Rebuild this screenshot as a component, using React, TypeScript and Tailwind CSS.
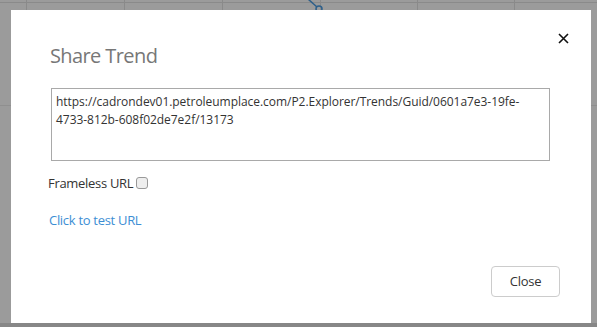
import React from "react";

export default function App() {
  const vLines = [26, 124, 222, 320, 417, 514];
  return (
    <div
      className="relative w-[597px] h-[327px] overflow-hidden bg-[#9b9b9b]"
      style={{ fontFamily: '"Open Sans", "Noto Sans", sans-serif' }}
    >
      {/* background canvas under the overlay */}
      {vLines.map((x) => (
        <div key={x} className="absolute top-0 h-[10px] w-px bg-[#8a8a8a]" style={{ left: x }} />
      ))}
      <div className="absolute left-0 top-[2px] w-full h-px bg-[#8a8a8a]" />
      <div className="absolute left-0 top-[105px] w-full h-px bg-[#8f8f8f]" />
      <svg className="absolute left-[305px] top-0" width="20" height="12" viewBox="0 0 20 12">
        <path d="M3 -1 L12 7" stroke="#2d5f8a" strokeWidth="1.5" fill="none" />
        <circle cx="14" cy="9" r="3" stroke="#2d5f8a" strokeWidth="1.5" fill="none" />
      </svg>
      <div className="absolute left-0 bottom-0 w-full h-[4px] bg-[#878787]" />

      {/* modal */}
      <div className="absolute left-[11px] top-[10px] w-[580px] h-[313px] bg-white flex flex-col">
        <div className="relative flex items-start pl-[39px] pr-[22px] pt-[32px]">
          <h2 className="text-[20px] leading-[28px] text-[#777] font-normal tracking-[-0.6px]">Share Trend</h2>
          <button className="absolute right-[22px] top-[22px] w-[12px] h-[12px] flex items-center justify-center">
            <svg width="11" height="11" viewBox="0 0 11 11">
              <path d="M1 1 L10 10 M10 1 L1 10" stroke="#111" strokeWidth="1.6" />
            </svg>
          </button>
        </div>
        <div className="pl-[40px] pt-[18px]">
          <div className="w-[499px] h-[73px] border border-[#a9a9a9] px-[4px] py-[4px] text-[12px] leading-[18px] text-[#333] tracking-[-0.04px]">
            <div>https://cadrondev01.petroleumplace.com/P2.Explorer/Trends/Guid/0601a7e3-19fe-</div>
            <div>4733-812b-608f02de7e2f/13173</div>
          </div>
        </div>
        <div className="pl-[37px] pt-[13px] flex items-center text-[13px] leading-[18px] text-[#333]">
          <span className="tracking-[-0.3px]">Frameless URL</span>
          <span className="ml-[3px] w-[12px] h-[12px] rounded-[3px] border border-[#999] bg-[#eee]" />
        </div>
        <div className="pl-[38px] pt-[19px] text-[13px] leading-[18px] text-[#3d8ed4] tracking-[-0.3px]">
          Click to test URL
        </div>
        <div className="flex-1" />
        <div className="flex justify-end pr-[31px] pb-[26px]">
          <button className="w-[69px] h-[31px] rounded-[4px] border border-[#ccc] bg-white text-[13px] text-[#333] tracking-[-0.3px]">
            Close
          </button>
        </div>
      </div>
    </div>
  );
}
